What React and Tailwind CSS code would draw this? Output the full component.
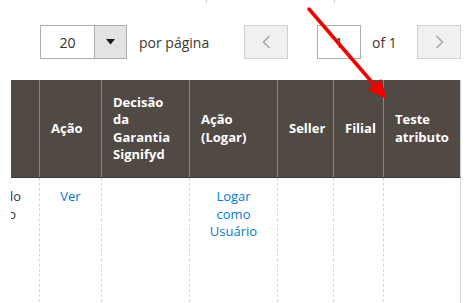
import React from 'react'

const cols = [
    { w: 'w-[28px]', title: '' },
    { w: 'w-[62px]', title: 'Ação' },
    { w: 'w-[88px]', title: 'Decisão da Garantia Signifyd' },
    { w: 'w-[88px]', title: 'Ação (Logar)' },
    { w: 'w-[56px]', title: 'Seller' },
    { w: 'w-[50px]', title: 'Filial' },
    { w: 'w-[77px]', title: 'Teste atributo' },
]

const Chevron = ({ dir }) => (
    <svg width="9" height="14" viewBox="0 0 9 14" fill="none">
        <polyline
            points={dir === 'left' ? '7.5,1 1.5,7 7.5,13' : '1.5,1 7.5,7 1.5,13'}
            stroke="#a8a8a8"
            strokeWidth="1.6"
        />
    </svg>
)

const App = () => {
    return (
        <div className="relative w-[472px] h-[303px] overflow-hidden bg-white font-['Open_Sans',sans-serif] text-[#303030]">
            {/* remnants of the row above */}
            <div className="flex h-[3px]">
                <div className="ml-[206px] w-px bg-[#d0d0d0]" />
                <div className="ml-[127px] w-px bg-[#d0d0d0]" />
            </div>

            {/* pager controls */}
            <div className="mt-[22px] flex h-[34px] items-stretch text-[14px]">
                <div className="ml-[40px] flex w-[87px] border border-[#adadad]">
                    <div className="flex flex-1 items-center justify-center">20</div>
                    <div className="flex w-[32px] items-center justify-center border-l border-[#adadad] bg-[#e3e3e3]">
                        <svg width="9" height="6" viewBox="0 0 9 6">
                            <polygon points="0,0 9,0 4.5,5.5" fill="#1a1a1a" />
                        </svg>
                    </div>
                </div>
                <span className="flex w-[117px] items-center pl-[12px] text-[#41362f]">por página</span>
                <button className="flex w-[44px] items-center justify-center border border-[#d1d1d1] bg-[#f0f0f0]">
                    <Chevron dir="left" />
                </button>
                <div className="ml-[29px] flex w-[44px] items-center justify-center border border-[#adadad]">1</div>
                <span className="flex w-[56px] items-center pl-[11px] text-[#41362f]">of 1</span>
                <button className="flex w-[44px] items-center justify-center border border-[#d1d1d1] bg-[#f0f0f0]">
                    <Chevron dir="right" />
                </button>
            </div>

            {/* grid */}
            <div className="ml-[11px] mt-[21px] w-[450px]">
                <div className="flex h-[97px] border-r border-[#cfcfcf] bg-[#514943] text-[13px] font-bold leading-[17.5px] text-white">
                    {cols.map((c, i) => (
                        <div
                            key={i}
                            className={`${c.w} flex items-center px-[11px] ${i > 0 ? 'border-l border-[#8a8280]' : ''}`}
                        >
                            {c.title}
                        </div>
                    ))}
                </div>
                <div className="flex h-[130px] border-r border-t border-r-[#d6d6d6] border-t-[#3d3632] text-[13px] leading-[17.5px]">
                    <div className="w-[28px] overflow-hidden pt-[10px]">
                        <div className="-ml-[70px] w-[80px] whitespace-nowrap text-right">
                            <div>Cancelado</div>
                            <div className="mr-[5px]">Ativo</div>
                        </div>
                    </div>
                    <div className="w-[62px] border-l border-dashed border-[#d6d6d6] pt-[10px] text-center text-[#007bdb]">Ver</div>
                    <div className="w-[88px] border-l border-dashed border-[#d6d6d6]" />
                    <div className="w-[88px] border-l border-dashed border-[#d6d6d6] px-[14px] pt-[10px] text-center text-[#007bdb]">
                        Logar como Usuário
                    </div>
                    <div className="w-[56px] border-l border-dashed border-[#d6d6d6]" />
                    <div className="w-[50px] border-l border-dashed border-[#d6d6d6]" />
                    <div className="w-[77px] border-l border-dashed border-[#d6d6d6]" />
                </div>
            </div>

            {/* annotation arrow */}
            <svg className="pointer-events-none absolute left-0 top-0" width="472" height="303">
                <line x1="309" y1="9" x2="377" y2="88" stroke="#f20000" strokeWidth="3.5" strokeLinecap="round" />
                <polygon points="387,99 368,90 381,79" fill="#f20000" />
            </svg>
        </div>
    )
}

export default App
